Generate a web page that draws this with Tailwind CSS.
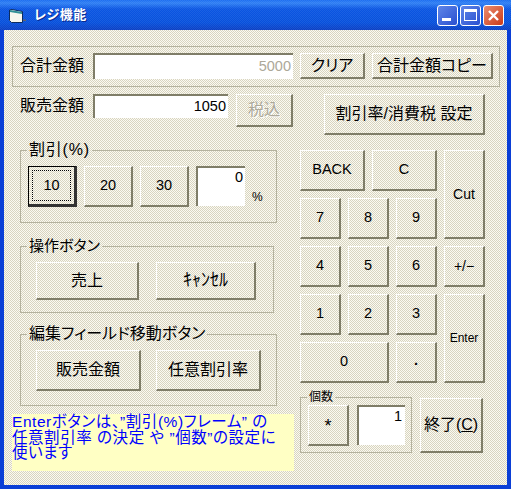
<!DOCTYPE html>
<html lang="ja">
<head>
<meta charset="utf-8">
<script src="https://cdn.jsdelivr.net/npm/@tailwindcss/browser@4"></script>
</head>
<body class="bg-[#0b3fd6]">
<div class="w-[511px] h-[489px] flex flex-col overflow-hidden bg-[#0b3fd6] text-black font-['Liberation_Sans','Noto_Sans_CJK_JP',sans-serif] [font-feature-settings:'palt']">
  <!-- title bar -->
  <div class="h-[30px] shrink-0 flex items-center pl-[9px] pr-[7px] bg-[repeating-conic-gradient(#0000_0_25%,#ffffff14_0_50%),linear-gradient(180deg,#1a6cf0_0%,#2f80f4_10%,#0a55e2_30%,#0650dc_75%,#0a3fc4_100%)] bg-[length:2px_2px,100%_100%]">
    <svg class="w-[18px] h-[15px] shrink-0 mt-[3px]" viewBox="0 0 18 15">
      <path d="M0.5 1 L3 0.5 L13.5 2.5 L13.5 13.5 L2.5 13.5 L0.5 11.5 Z" fill="#f6f6ee" stroke="#0c2c60" stroke-width="1"/>
      <path d="M1 1 L13 3 L13 5 L1 3 Z" fill="#2f8f96"/>
      <path d="M14 10.5 h3 v1.5 h-3 Z" fill="#5a6070"/>
    </svg>
    <span class="ml-[7px] text-[13px] font-bold tracking-[0.5px] text-white [text-shadow:1px_1px_0_#0a2a90]">レジ機能</span>
    <div class="ml-auto flex gap-[2px]">
      <div class="w-[21px] h-[21px] rounded-[3px] border border-white bg-[linear-gradient(135deg,#5f86e8,#2a50d0)] flex items-end pl-[4px] pb-[4px]"><div class="w-[9px] h-[3px] bg-white"></div></div>
      <div class="w-[21px] h-[21px] rounded-[3px] border border-white bg-[linear-gradient(135deg,#5f86e8,#2a50d0)] flex items-center justify-center"><div class="w-[13px] h-[12px] border border-white border-t-[3px]"></div></div>
      <div class="w-[21px] h-[21px] rounded-[3px] border border-white bg-[linear-gradient(135deg,#ea8d70,#cc3a18)] flex items-center justify-center">
        <svg class="w-[13px] h-[13px]" viewBox="0 0 13 13"><path d="M2 2 L11 11 M11 2 L2 11" stroke="#fff" stroke-width="2.4"/></svg>
      </div>
    </div>
  </div>
  <!-- client area -->
  <div class="mx-[4px] mb-[4px] flex-1 pl-[8px] pt-[16px] bg-[repeating-conic-gradient(#fbfaf2_0_25%,#d8d4c0_0_50%)] bg-[length:2px_2px]">
    <!-- total row -->
    <div class="w-[488px] h-[41px] border border-[#b4b29e] flex items-center pl-[7px] pb-[1px]">
      <span class="w-[73px] text-[16px] leading-none">合計金額</span>
      <div class="w-[200px] h-[26px] bg-white border-t-2 border-l-2 border-[#7f7d68] flex items-center justify-end pr-[2px] text-[14.5px] text-[#aca899]">5000</div>
      <button class="ml-[7px] w-[65px] h-[26px] flex items-center justify-center border-t border-l border-white border-b-2 border-r-2 border-b-[#7f7d68] border-r-[#7f7d68] text-[16px]">クリア</button>
      <button class="ml-[7px] w-[121px] h-[26px] flex items-center justify-center border-t border-l border-white border-b-2 border-r-2 border-b-[#7f7d68] border-r-[#7f7d68] text-[16px]">合計金額コピー</button>
    </div>
    <div class="flex">
      <!-- left column -->
      <div class="w-[288px]">
        <div class="mt-[7px] h-[41px] pl-[8px] flex items-start">
          <span class="w-[73px] mt-[4px] text-[16px] leading-[16px]">販売金額</span>
          <div class="w-[135px] h-[24px] bg-white border-t-2 border-l-2 border-[#7f7d68] flex items-center justify-end pr-[2px] text-[14.5px]">1050</div>
          <button class="ml-[8px] w-[57px] h-[33px] flex items-center justify-center border-t border-l border-white border-b-2 border-r-2 border-b-[#7f7d68] border-r-[#7f7d68] text-[16px] text-[#aca899] [text-shadow:1px_1px_0_#fff]">税込</button>
        </div>
        <fieldset class="mt-[7px] ml-[8px] w-[257px] h-[81px] border border-[#b4b29e]">
          <legend class="ml-[6px] px-[2px] h-[16px] text-[16px] leading-[16px] tracking-[0.8px]">割引(%)</legend>
          <div class="mt-[8px] ml-[7px] flex gap-[7px] items-start">
            <button class="w-[49px] h-[41px] border border-black border-b-[3px] border-r-[3px] border-b-[#333] border-r-[#333] p-[3px] text-[14.5px]"><span class="h-full flex items-center justify-center border border-dotted border-black">10</span></button>
            <button class="w-[49px] h-[41px] flex items-center justify-center border-t border-l border-white border-b-2 border-r-2 border-b-[#7f7d68] border-r-[#7f7d68] text-[14.5px]">20</button>
            <button class="w-[49px] h-[41px] flex items-center justify-center border-t border-l border-white border-b-2 border-r-2 border-b-[#7f7d68] border-r-[#7f7d68] text-[14.5px]">30</button>
            <div class="w-[49px] h-[40px] bg-white border-t-2 border-l-2 border-[#7f7d68] text-right pr-[2px] text-[14.5px] leading-[18px]">0</div>
            <span class="self-end text-[12px] leading-[12px] mb-[4px]">%</span>
          </div>
        </fieldset>
        <fieldset class="mt-[15px] ml-[8px] w-[254px] h-[75px] border border-[#b4b29e]">
          <legend class="ml-[6px] px-[2px] h-[16px] text-[15px] leading-[16px]">操作ボタン</legend>
          <div class="mt-[8px] ml-[15px] flex gap-[17px]">
            <button class="w-[103px] h-[38px] flex items-center justify-center border-t border-l border-white border-b-2 border-r-2 border-b-[#7f7d68] border-r-[#7f7d68] text-[16px]">売上</button>
            <button class="w-[100px] h-[38px] flex items-center justify-center border-t border-l border-white border-b-2 border-r-2 border-b-[#7f7d68] border-r-[#7f7d68] text-[18px]">ｷｬﾝｾﾙ</button>
          </div>
        </fieldset>
        <fieldset class="mt-[13px] ml-[8px] w-[257px] h-[80px] border border-[#b4b29e]">
          <legend class="ml-[6px] px-[2px] h-[16px] text-[16px] leading-[16px]">編集フィールド移動ボタン</legend>
          <div class="mt-[8px] ml-[15px] flex gap-[15px]">
            <button class="w-[105px] h-[41px] flex items-center justify-center border-t border-l border-white border-b-2 border-r-2 border-b-[#7f7d68] border-r-[#7f7d68] text-[16px]">販売金額</button>
            <button class="w-[105px] h-[41px] flex items-center justify-center border-t border-l border-white border-b-2 border-r-2 border-b-[#7f7d68] border-r-[#7f7d68] text-[16px]">任意割引率</button>
          </div>
        </fieldset>
        <div class="mt-[8px] w-[282px] h-[57px] bg-[#ffffc4] text-[#0000ff] text-[15.5px] leading-[15.5px] whitespace-nowrap tracking-[0.55px]">Enterボタンは、”割引(%)フレーム” の<br>任意割引率 の決定 や ”個数”の設定に<br>使います</div>
      </div>
      <!-- right column -->
      <div class="w-[200px]">
        <button class="mt-[7px] ml-[24px] w-[161px] h-[41px] flex items-center justify-center border-t border-l border-white border-b-2 border-r-2 border-b-[#7f7d68] border-r-[#7f7d68] text-[16px]">割引率/消費税 設定</button>
        <div class="mt-[15px] grid grid-cols-[41px_41px_41px_41px] auto-rows-[41px] gap-[7px] text-[14.5px]">
          <div class="col-span-3 flex gap-[7px]">
            <button class="w-[65px] h-[41px] flex items-center justify-center border-t border-l border-white border-b-2 border-r-2 border-b-[#7f7d68] border-r-[#7f7d68]">BACK</button>
            <button class="w-[65px] h-[41px] flex items-center justify-center border-t border-l border-white border-b-2 border-r-2 border-b-[#7f7d68] border-r-[#7f7d68]">C</button>
          </div>
          <button class="row-span-2 flex items-center justify-center border-t border-l border-white border-b-2 border-r-2 border-b-[#7f7d68] border-r-[#7f7d68] text-[14px]">Cut</button>
          <button class="flex items-center justify-center border-t border-l border-white border-b-2 border-r-2 border-b-[#7f7d68] border-r-[#7f7d68]">7</button>
          <button class="flex items-center justify-center border-t border-l border-white border-b-2 border-r-2 border-b-[#7f7d68] border-r-[#7f7d68]">8</button>
          <button class="flex items-center justify-center border-t border-l border-white border-b-2 border-r-2 border-b-[#7f7d68] border-r-[#7f7d68]">9</button>
          <button class="flex items-center justify-center border-t border-l border-white border-b-2 border-r-2 border-b-[#7f7d68] border-r-[#7f7d68]">4</button>
          <button class="flex items-center justify-center border-t border-l border-white border-b-2 border-r-2 border-b-[#7f7d68] border-r-[#7f7d68]">5</button>
          <button class="flex items-center justify-center border-t border-l border-white border-b-2 border-r-2 border-b-[#7f7d68] border-r-[#7f7d68]">6</button>
          <button class="flex items-center justify-center border-t border-l border-white border-b-2 border-r-2 border-b-[#7f7d68] border-r-[#7f7d68] text-[14px]">+/−</button>
          <button class="flex items-center justify-center border-t border-l border-white border-b-2 border-r-2 border-b-[#7f7d68] border-r-[#7f7d68]">1</button>
          <button class="flex items-center justify-center border-t border-l border-white border-b-2 border-r-2 border-b-[#7f7d68] border-r-[#7f7d68]">2</button>
          <button class="flex items-center justify-center border-t border-l border-white border-b-2 border-r-2 border-b-[#7f7d68] border-r-[#7f7d68]">3</button>
          <button class="row-span-2 flex items-center justify-center border-t border-l border-white border-b-2 border-r-2 border-b-[#7f7d68] border-r-[#7f7d68] text-[12px]">Enter</button>
          <button class="col-span-2 flex items-center justify-center border-t border-l border-white border-b-2 border-r-2 border-b-[#7f7d68] border-r-[#7f7d68]">0</button>
          <button class="flex items-center justify-center border-t border-l border-white border-b-2 border-r-2 border-b-[#7f7d68] border-r-[#7f7d68] font-bold pb-[3px]">.</button>
        </div>
        <div class="mt-[6px] flex items-start">
          <fieldset class="w-[112px] h-[64px] border border-[#b4b29e]">
            <legend class="ml-[6px] px-[2px] h-[16px] text-[12px] leading-[16px]">個数</legend>
            <div class="ml-[7px] flex gap-[8px]">
              <button class="w-[41px] h-[41px] flex items-center justify-center border-t border-l border-white border-b-2 border-r-2 border-b-[#7f7d68] border-r-[#7f7d68] text-[18px] pt-[3px]">*</button>
              <div class="w-[48px] h-[40px] bg-white border-t-2 border-l-2 border-[#7f7d68] text-right pr-[3px] text-[14.5px] leading-[18px]">1</div>
            </div>
          </fieldset>
          <button class="ml-[8px] mt-[9px] w-[63px] h-[55px] flex items-center justify-center border-t border-l border-white border-b-2 border-r-2 border-b-[#7f7d68] border-r-[#7f7d68] text-[16px]"><span>終了(<u>C</u>)</span></button>
        </div>
      </div>
    </div>
  </div>
</div>
</body>
</html>
